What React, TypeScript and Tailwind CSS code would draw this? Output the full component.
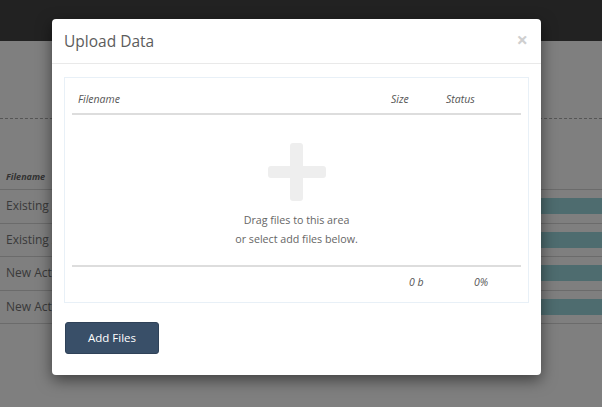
const rows = ["Existing Account Data", "Existing Account Data", "New Action Items", "New Action Items"];

function Background() {
  return (
    <div className="h-[407px] bg-white">
      <div className="h-[41px] bg-[#444444]" />
      <div className="mt-[77px] border-t border-dashed border-[#aaaaaa]" />
      <div className="mt-[46px]">
        <div className="h-[24px] flex items-center px-[6px] text-[9px] font-bold italic text-[#666]">Filename</div>
        {rows.map((r, i) => (
          <div key={i} className="h-[33.5px] border-t border-[#d6d6d6] flex items-center justify-between pl-[6px]">
            <span className="text-[12px] text-[#747474]">{r}</span>
            <div className="w-[220px] h-[16px] bg-[#9cd8de]" />
          </div>
        ))}
        <div className="border-t border-[#d6d6d6]" />
      </div>
    </div>
  );
}

function PlusIcon() {
  return (
    <svg width="58" height="58" viewBox="0 0 58 58">
      <rect x="22" y="0" width="13" height="58" rx="3" fill="#eeeeee" />
      <rect x="0" y="23" width="58" height="12" rx="3" fill="#eeeeee" />
    </svg>
  );
}

export default function App() {
  return (
    <div className="relative h-[407px] overflow-hidden" style={{ fontFamily: '"Open Sans", sans-serif' }}>
      <Background />
      <div className="absolute inset-0 bg-black/50" />
      <div className="absolute left-[52px] top-[19px] w-[489px] bg-white rounded-[4px] shadow-[0_5px_15px_rgba(0,0,0,0.5)]">
        <div className="h-[45px] px-[12px] flex items-center justify-between border-b border-[#e9e9e9]">
          <h4 className="text-[15.5px] text-[#5c5c5c] pt-[2px]">Upload Data</h4>
          <button className="text-[20px] leading-none font-bold text-[#cfcfcf] mr-[1px] -mt-[3px]">×</button>
        </div>
        <div className="px-[12px] pt-[13px] pb-[21px]">
          <div className="h-[226px] border border-[#e8f0f7] px-[7px] flex flex-col">
            <div className="grid grid-cols-[313px_55px_1fr] h-[37px] items-end pb-[5px] text-[10.5px] italic text-[#555] border-b-2 border-[#dddddd]">
              <span className="pl-[6px]">Filename</span>
              <span className="pl-[6px]">Size</span>
              <span className="pl-[6px]">Status</span>
            </div>
            <div className="h-[150px] flex flex-col items-center pt-[28px]">
              <PlusIcon />
              <p className="mt-[10px] text-[10.7px] leading-[19px] text-[#666] text-center">
                Drag files to this area
                <br />
                or select add files below.
              </p>
            </div>
            <div className="grid grid-cols-[313px_55px_1fr] border-t-2 border-[#dddddd] pt-[8px] text-[10.5px] italic text-[#555]">
              <span />
              <span className="pl-[24px]">0 b</span>
              <span className="pl-[34px]">0%</span>
            </div>
          </div>
          <button className="mt-[19px] ml-[1px] w-[94px] h-[32px] rounded-[3px] bg-[#394f68] border border-[#2f4258] text-white text-[11.5px]">
            Add Files
          </button>
        </div>
      </div>
    </div>
  );
}
